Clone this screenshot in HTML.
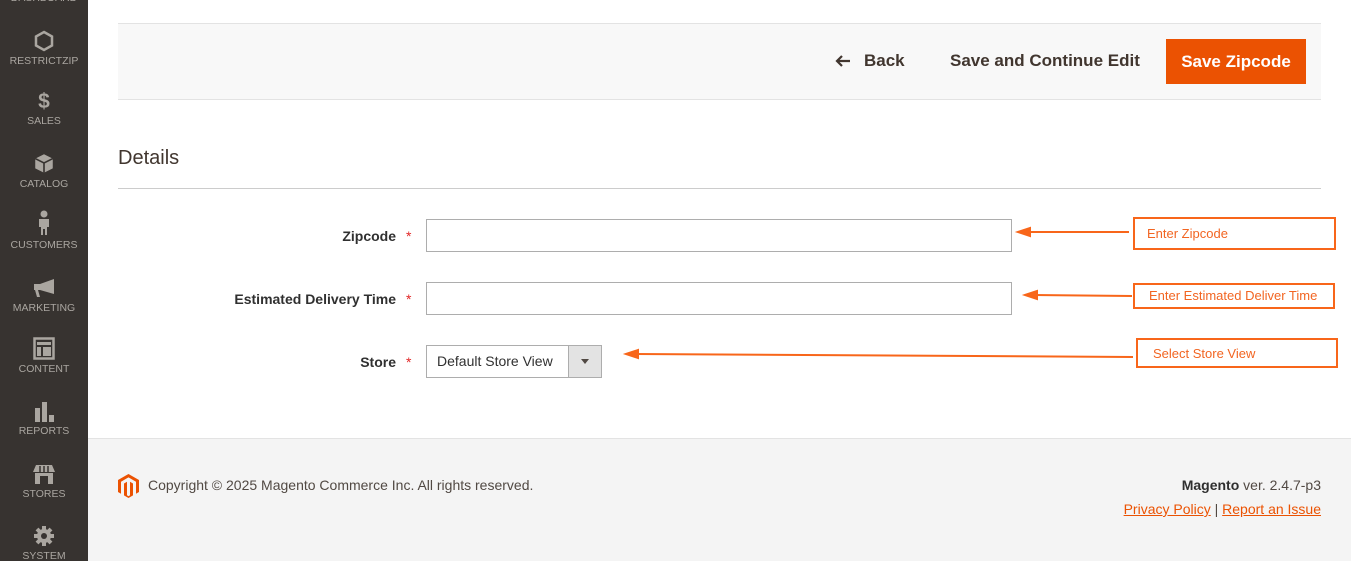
<!DOCTYPE html>
<html><head><meta charset="utf-8"><style>
*{margin:0;padding:0;box-sizing:border-box}
body{width:1351px;height:561px;overflow:hidden;background:#fff;font-family:"Liberation Sans",sans-serif;position:relative;color:#303030}
.sb{position:absolute;left:0;top:0;width:88px;height:561px;background:#373330}
.it{position:absolute;left:0;width:88px;text-align:center;color:#aaa6a0;font-size:10.5px;letter-spacing:0}
.it svg{display:block;margin:0 auto 3px}
.tb{position:absolute;left:118px;top:23px;width:1203px;height:77px;background:#f8f8f8;border-top:1px solid #e3e3e3;border-bottom:1px solid #e3e3e3}
.btn{position:absolute;top:38px;font-size:17px;font-weight:bold;color:#41362f}
.save{position:absolute;left:1166px;top:39px;width:140px;height:45px;background:#eb5202;color:#fff;font-size:17px;font-weight:bold;text-align:center;line-height:45px}
h2{position:absolute;left:118px;top:147px;font-size:20px;font-weight:normal;color:#41362f}
.hr{position:absolute;left:118px;top:188px;width:1203px;height:1px;background:#ccc}
.lb{position:absolute;right:955px;font-size:14px;font-weight:bold;color:#303030}
.st{position:absolute;left:406px;color:#e22626;font-size:14px}
.in{position:absolute;left:426px;width:586px;height:33px;border:1px solid #adadad;background:#fff}
.sel{position:absolute;left:426px;top:345px;width:176px;height:33px;border:1px solid #adadad;font-size:14px;line-height:31px;padding-left:10px;color:#303030}
.sel .ar{position:absolute;right:0;top:0;width:33px;height:31px;background:#e3e3e3;border-left:1px solid #adadad}
.sel .ar:after{content:"";position:absolute;left:12px;top:13px;border:4px solid transparent;border-top:5px solid #514943}
.ann{position:absolute;border:2px solid #f8661a;color:#f26522;font-size:13px;padding-left:12px}
.ft{position:absolute;left:88px;top:438px;width:1263px;height:123px;background:#f4f4f4;border-top:1px solid #e3e3e3}
a{color:#eb5202;text-decoration:underline}
</style></head><body>
<div class="sb">
<div class="it" style="top:-8px">DASHBOARD</div>
<div class="it" style="top:30px"><svg width="20" height="22" viewBox="0 0 20 22"><path d="M10 2L18 6.5V15.5L10 20L2 15.5V6.5Z" fill="none" stroke="#aaa6a0" stroke-width="2.5"/></svg>RESTRICTZIP</div>
<div class="it" style="top:91px"><div style="font-size:21px;font-weight:bold;line-height:21px;height:24px">$</div>SALES</div>
<div class="it" style="top:152px"><svg width="22" height="23" viewBox="0 0 20 21"><path d="M2 6L10 2L18 6V15L10 19L2 15Z" fill="#aaa6a0"/><path d="M2 6L10 10L18 6M10 10V19" stroke="#373330" stroke-width="1.5" fill="none"/></svg>CATALOG</div>
<div class="it" style="top:210px"><svg width="14" height="26" viewBox="0 0 14 26"><circle cx="7" cy="4" r="3.5" fill="#aaa6a0"/><path d="M2 9H12V17H10V25H8V19H6V25H4V17H2Z" fill="#aaa6a0"/></svg>CUSTOMERS</div>
<div class="it" style="top:278px"><svg width="24" height="21" viewBox="0 0 24 21"><path d="M2 6H8L22 1V16L8 12H6L8 19H5L3 12H2Z" fill="#aaa6a0"/></svg>MARKETING</div>
<div class="it" style="top:337px"><svg width="22" height="23" viewBox="0 0 22 23"><rect x="1.5" y="1.5" width="19" height="20" fill="none" stroke="#aaa6a0" stroke-width="2.5"/><rect x="4" y="5" width="14" height="3" fill="#aaa6a0"/><rect x="4" y="10" width="4" height="9" fill="#aaa6a0"/><rect x="10" y="10" width="8" height="9" fill="#aaa6a0"/></svg>CONTENT</div>
<div class="it" style="top:400px"><svg width="22" height="22" viewBox="0 0 22 22"><rect x="2" y="8" width="5" height="14" fill="#aaa6a0"/><rect x="9" y="2" width="5" height="20" fill="#aaa6a0"/><rect x="16" y="15" width="5" height="7" fill="#aaa6a0"/></svg>REPORTS</div>
<div class="it" style="top:464px"><svg width="24" height="21" viewBox="0 0 24 21"><path d="M4 1H20L23 8H1Z" fill="#aaa6a0"/><path d="M3 9H21V20H3Z" fill="#aaa6a0"/><path d="M8 2V8M12 2V8M16 2V8" stroke="#373330" stroke-width="1.5"/><rect x="8" y="12" width="8" height="8" fill="#373330"/></svg>STORES</div>
<div class="it" style="top:525px"><svg width="22" height="22" viewBox="0 0 22 22"><circle cx="11" cy="11" r="7" fill="#aaa6a0"/><path d="M11 1V21M1 11H21M4 4L18 18M18 4L4 18" stroke="#aaa6a0" stroke-width="4"/><circle cx="11" cy="11" r="3" fill="#373330"/></svg>SYSTEM</div>
</div>
<div class="tb"></div>
<svg style="position:absolute;left:835px;top:54px" width="16" height="14" viewBox="0 0 16 14"><path d="M15 7H2M7 2L2 7L7 12" stroke="#41362f" stroke-width="2.2" fill="none"/></svg>
<div class="btn" style="left:864px;top:51px">Back</div>
<div class="btn" style="left:950px;top:51px">Save and Continue Edit</div>
<div class="save">Save Zipcode</div>
<h2>Details</h2>
<div class="hr"></div>
<div class="lb" style="top:228px">Zipcode</div><div class="st" style="top:228px">*</div>
<div class="in" style="top:219px"></div>
<div class="lb" style="top:291px">Estimated Delivery Time</div><div class="st" style="top:291px">*</div>
<div class="in" style="top:282px"></div>
<div class="lb" style="top:354px">Store</div><div class="st" style="top:354px">*</div>
<div class="sel">Default Store View<div class="ar"></div></div>
<svg style="position:absolute;left:0;top:0" width="1351" height="561"><g stroke="#f8661a" stroke-width="2" fill="#f8661a"><line x1="1026" y1="232" x2="1129" y2="232"/><path d="M1018 232L1030 228V236Z"/><line x1="1033" y1="295" x2="1132" y2="296"/><path d="M1025 295L1037 291V299Z"/><line x1="634" y1="354" x2="1133" y2="357"/><path d="M626 354L638 350V358Z"/></g></svg>
<div class="ann" style="left:1133px;top:217px;width:203px;height:33px;line-height:29px">Enter Zipcode</div>
<div class="ann" style="left:1133px;top:283px;width:202px;height:26px;line-height:22px;padding-left:14px">Enter Estimated Deliver Time</div>
<div class="ann" style="left:1136px;top:338px;width:202px;height:30px;line-height:28px;padding-left:15px">Select Store View</div>
<div class="ft"></div>
<svg style="position:absolute;left:118px;top:474px" width="21" height="24" viewBox="0 0 21 24"><path d="M10.5 0L21 6V18L18 19.7V7.7L10.5 3.4L3 7.7V19.7L0 18V6Z M6 9.5L9 7.8V21.3L10.5 22.2L12 21.3V7.8L15 9.5V21.4L10.5 24L6 21.4Z" fill="#eb5202"/></svg>
<div style="position:absolute;left:148px;top:477px;font-size:14px;color:#514943">Copyright © 2025 Magento Commerce Inc. All rights reserved.</div>
<div style="position:absolute;right:30px;top:477px;font-size:14px;color:#514943"><b style="color:#303030">Magento</b> ver. 2.4.7-p3</div>
<div style="position:absolute;right:30px;top:501px;font-size:14px;color:#514943"><a>Privacy Policy</a> | <a>Report an Issue</a></div>
</body></html>
